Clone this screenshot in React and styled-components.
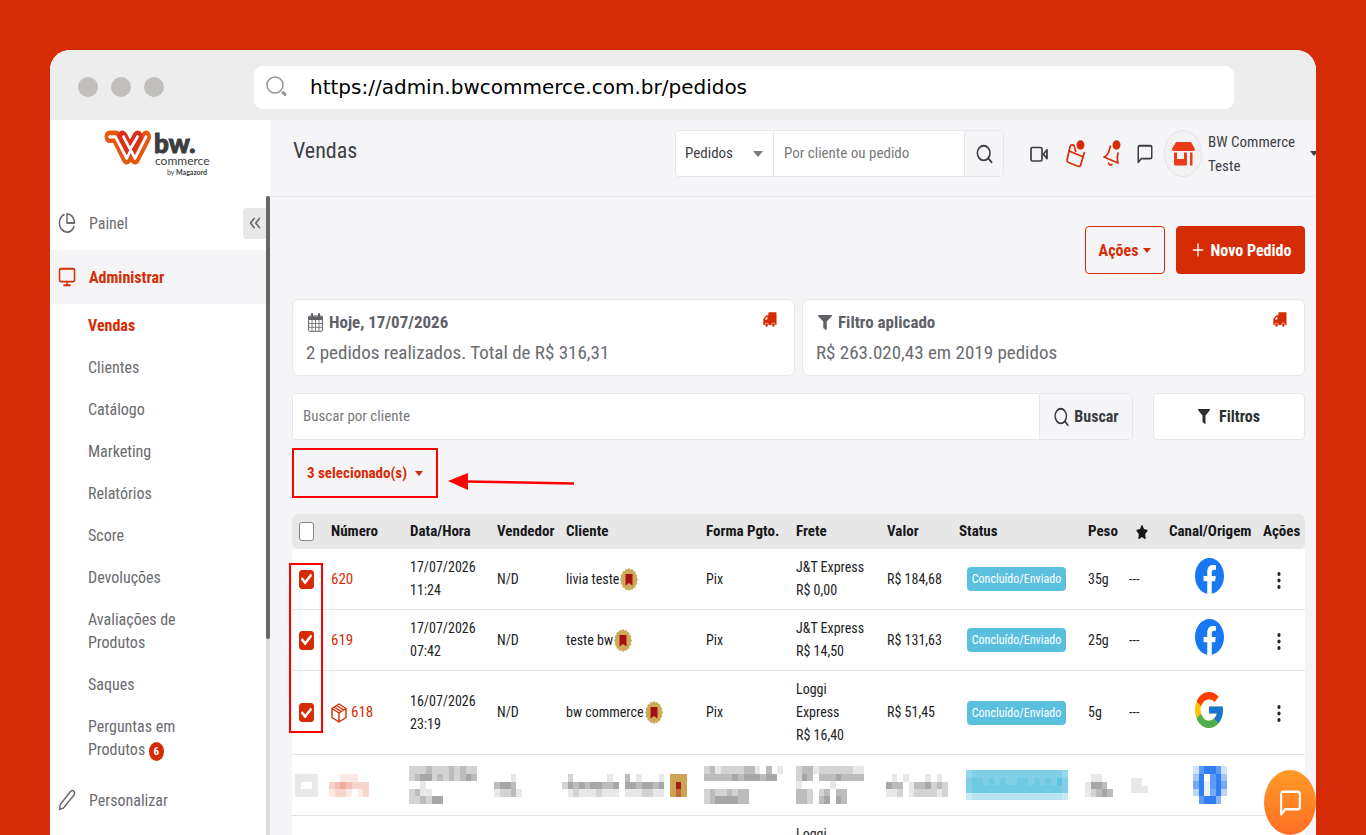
import React, { useState } from 'react'

import styled, { createGlobalStyle, css } from 'styled-components'

import { FiPieChart, FiMonitor, FiMessageSquare, FiSearch, FiChevronsLeft, FiPlus } from 'react-icons/fi'
import { FaFacebook, FaFilter, FaStar, FaCheck } from 'react-icons/fa'
import { FcGoogle } from 'react-icons/fc'

const red = '#d62c05'
const marker = '#ff0000'

const GlobalStyle = createGlobalStyle`
  * {
    box-sizing: border-box;
  }
  body {
    margin: 0;
    background: ${red};
    color: #212325;
    font-family: 'Roboto Condensed', Roboto, sans-serif;
    font-size: 15px;
    line-height: 23px;
  }
  button, input, select {
    font: inherit;
    color: inherit;
  }
  a {
    color: inherit;
    text-decoration: none;
  }
`

const Stage = styled.div`
  height: 100vh;
  padding: 50px 50px 0;
  overflow: hidden;
`

const BrowserWindow = styled.div`
  display: flex;
  flex-direction: column;
  height: 100%;
  overflow: hidden;
  border-radius: 20px 20px 0 0;
  background: #f5f5f8;
`

const BrowserBar = styled.div`
  display: flex;
  flex-shrink: 0;
  align-items: center;
  height: 70px;
  padding: 4px 82px 0 28px;
  background: #ededed;
`

const Dot = styled.span`
  width: 20px;
  height: 20px;
  margin-right: 13px;
  border-radius: 50%;
  background: #c0bfbd;
`

const AddressBar = styled.label`
  display: flex;
  flex: 1;
  align-items: center;
  height: 43px;
  margin-left: 77px;
  padding-left: 12px;
  border-radius: 9px;
  background: #fff;
`

const AddressInput = styled.input`
  flex: 1;
  margin-left: 22px;
  padding: 0;
  border: 0;
  outline: 0;
  background: none;
  color: #000;
  font-family: 'DejaVu Sans', sans-serif;
  font-size: 20px;
`

const Page = styled.div`
  display: flex;
  flex: 1;
  min-height: 0;
`

const Sidebar = styled.aside`
  display: flex;
  flex-shrink: 0;
  flex-direction: column;
  width: 220px;
  background: #fff;
`

const LogoLink = styled.a`
  display: flex;
  flex-shrink: 0;
  height: 76px;
  padding: 8px 0 0 54px;
`

const MenuScroll = styled.div`
  display: flex;
  flex: 1;
  min-height: 0;
`

const Menu = styled.nav`
  flex: 1;
  overflow: hidden;
  color: #6b6c70;
  font-size: 16px;
`

const ScrollTrack = styled.div`
  width: 4px;
  background: #dcdcdd;
`

const ScrollThumb = styled.div`
  height: 443px;
  border-radius: 2px;
  background: #666;
`

const MenuRow = styled.div`
  display: flex;
  align-items: center;
  height: 54px;
  padding-left: 8px;
  ${({ $active }) => $active && css`
    background: #f5f5f8;
    color: ${red};
    font-weight: bold;
  `}
`

const MenuLink = styled.a`
  display: flex;
  flex: 1;
  align-items: center;
  gap: 13px;
`

const CollapseButton = styled.button`
  display: grid;
  place-items: center;
  width: 23px;
  height: 31px;
  padding: 0;
  border: 0;
  border-radius: 4px 0 0 4px;
  background: #e8e8e8;
`

const SubMenu = styled.ul`
  margin: 0;
  padding: 0 80px 3px 38px;
  list-style: none;
`

const SubItem = styled.li`
  padding: 10px 0 9px;
  ${({ $active }) => $active && css`
    color: ${red};
    font-weight: bold;
  `}
`

const Count = styled.span`
  display: inline-block;
  width: 15px;
  height: 19px;
  border-radius: 50%;
  background: ${red};
  color: #fff;
  font-size: 11px;
  font-weight: bold;
  line-height: 19px;
  text-align: center;
`

const Main = styled.main`
  position: relative;
  flex: 1;
  min-width: 0;
  overflow: hidden;
`

const TopBar = styled.header`
  display: flex;
  align-items: flex-start;
  height: 77px;
  padding: 10px 0 0 23px;
  border-bottom: 1px solid #e8e8ea;
`

const Title = styled.h1`
  flex: 1;
  margin: 0;
  color: #3e4044;
  font-size: 22px;
  font-weight: normal;
  line-height: 41px;
`

const fieldGroup = css`
  display: flex;
  height: 47px;
  overflow: hidden;
  border: 1px solid #e6e7ea;
  border-radius: 4px;
  background: #fff;
`

const GlobalSearch = styled.form`
  ${fieldGroup}
  width: 329px;
`

const SelectWrap = styled.label`
  display: flex;
  align-items: center;
  width: 98px;
  padding-right: 10px;
  border-right: 1px solid #e6e7ea;
  color: #3e4044;
`

const Select = styled.select`
  flex: 1;
  min-width: 0;
  height: 100%;
  padding: 0 0 0 9px;
  border: 0;
  outline: 0;
  appearance: none;
  background: none;
`

const Caret = styled.span`
  flex-shrink: 0;
  width: 0;
  height: 0;
  border: ${({ $size = 4 }) => $size}px solid transparent;
  border-top-color: currentColor;
  border-top-width: ${({ $size = 4 }) => $size + 1}px;
  border-bottom: 0;
  color: ${({ $color }) => $color};
`

const TextInput = styled.input`
  flex: 1;
  min-width: 0;
  padding: 0 10px;
  border: 0;
  outline: 0;
  background: #fff;
  &::placeholder {
    color: #77797c;
    opacity: 1;
  }
`

const SearchButton = styled.button`
  display: flex;
  align-items: center;
  justify-content: center;
  gap: 4px;
  width: ${({ $wide }) => ($wide ? 93 : 39)}px;
  padding: 0;
  border: 0;
  border-left: 1px solid #e6e7ea;
  background: #f5f5f8;
  color: #3a3c3f;
  font-size: 16px;
  font-weight: bold;
`

const HeaderTools = styled.div`
  display: flex;
  align-items: center;
  height: 47px;
  padding-left: 26px;
  color: #3a3c3f;
`

const ToolButton = styled.button`
  display: grid;
  place-items: center;
  width: ${({ $width }) => $width}px;
  margin-right: ${({ $gap }) => $gap}px;
  padding: 0;
  border: 0;
  background: none;
`

const Avatar = styled.span`
  display: grid;
  place-items: center;
  flex-shrink: 0;
  width: 38px;
  height: 47px;
  border: 1px solid #dfe3e8;
  border-radius: 50%;
  background: #f2f2f2;
`

const UserButton = styled.button`
  display: flex;
  align-items: center;
  width: 152px;
  padding: 0;
  border: 0;
  background: none;
  color: #3e4044;
  line-height: 24px;
  text-align: left;
`

const UserName = styled.span`
  flex-shrink: 0;
  width: 96px;
  margin: 0 6px;
`

const Content = styled.div`
  display: flex;
  flex-direction: column;
  padding: 29px 11px 0 22px;
`

const PageActions = styled.div`
  display: flex;
  justify-content: flex-end;
  gap: 11px;
  height: 48px;
  margin-bottom: 25px;
`

const ActionButton = styled.button`
  display: flex;
  align-items: center;
  justify-content: center;
  gap: 5px;
  width: ${({ $primary }) => ($primary ? 129 : 80)}px;
  padding: 0;
  border: 1px solid ${red};
  border-radius: 4px;
  background: ${({ $primary }) => ($primary ? red : 'transparent')};
  color: ${({ $primary }) => ($primary ? '#fff' : red)};
  font-size: 16px;
  font-weight: bold;
`

const Cards = styled.div`
  display: grid;
  grid-template-columns: 1fr 1fr;
  gap: 7px;
  margin-bottom: 17px;
`

const Card = styled.section`
  display: flex;
  align-items: flex-start;
  justify-content: space-between;
  height: 77px;
  padding: 10px 17px 0 13px;
  border: 1px solid #e8e8ea;
  border-radius: 7px;
  background: #fff;
  color: #6b6c70;
`

const CardTitle = styled.h2`
  display: flex;
  align-items: center;
  gap: 6px;
  margin: 0 0 3px 2px;
  color: #606267;
  font-size: 17px;
  line-height: 25px;
`

const CardText = styled.p`
  margin: 0;
  font-size: 19px;
  line-height: 30px;
`

const CardIcon = styled.span`
  padding-top: 2px;
`

const Filters = styled.div`
  display: flex;
  gap: 20px;
  margin-bottom: 8px;
`

const ClientSearch = styled.form`
  ${fieldGroup}
  flex: 1;
`

const FilterButton = styled.button`
  ${fieldGroup}
  align-items: center;
  justify-content: center;
  gap: 9px;
  width: 152px;
  color: #2c2e30;
  font-size: 16px;
  font-weight: bold;
`

const Selection = styled.div`
  display: flex;
  align-items: center;
  gap: 10px;
  margin-bottom: 16px;
`

const SelectedButton = styled.button`
  display: flex;
  align-items: center;
  gap: 8px;
  width: 146px;
  height: 50px;
  padding: 0 0 0 13px;
  border: 2px solid ${marker};
  background: transparent;
  color: ${red};
  font-weight: bold;
`

const ArrowBox = styled.span`
  padding-top: 18px;
  line-height: 0;
`

const TableWrap = styled.div`
  position: relative;
`

const Highlight = styled.div`
  position: absolute;
  top: 49px;
  left: -3px;
  width: 34px;
  height: 170px;
  border: 2px solid ${marker};
  pointer-events: none;
`

const Table = styled.table`
  width: 100%;
  table-layout: fixed;
  border-collapse: separate;
  border-spacing: 0;
  font-size: 14px;
`

const HeadCell = styled.th`
  height: 35px;
  padding: 0 0 0 8px;
  background: #e7e7e7;
  color: #17181a;
  font-size: 15px;
  text-align: left;
  white-space: nowrap;
  &:first-child {
    border-radius: 7px 0 0 7px;
  }
  &:last-child {
    border-radius: 0 7px 7px 0;
  }
`

const StarBox = styled.div`
  display: flex;
  padding-left: 7px;
`

const Cell = styled.td`
  height: 61px;
  padding: 7px 0 7px 8px;
  border-bottom: 1px solid #dfe4e8;
  background: #fff;
  vertical-align: ${({ $top }) => ($top ? 'top' : 'middle')};
  white-space: nowrap;
`

const CheckWrap = styled.label`
  display: grid;
  place-items: center;
  width: 15px;
  height: 19px;
  margin-left: -1px;
  color: #fff;
  > * {
    grid-area: 1 / 1;
  }
`

const CheckInput = styled.input`
  width: 15px;
  height: 19px;
  margin: 0;
  appearance: none;
  border: 1px solid #85878a;
  border-radius: 3px;
  background: #fff;
  &:checked {
    border-color: ${red};
    background: ${red};
  }
`

const Inline = styled.span`
  display: flex;
  align-items: center;
  gap: ${({ $gap = 0 }) => $gap}px;
`

const OrderLink = styled.a`
  color: ${red};
  font-size: 15px;
`

const Badge = styled.span`
  display: inline-block;
  width: 99px;
  height: 24px;
  margin-left: 8px;
  border-radius: 4px;
  background: #5bc0de;
  color: #fff;
  font-size: 12px;
  line-height: 24px;
  text-align: center;
  vertical-align: middle;
`

const Channel = styled.div`
  padding: 0 0 6px 26px;
  line-height: 0;
`

const MoreButton = styled.button`
  display: block;
  margin-left: 8px;
  padding: 6px 6px 4px;
  border: 0;
  background: none;
  line-height: 0;
`

const IconBox = styled.span`
  display: inline-block;
  flex-shrink: 0;
  width: ${({ $w }) => $w}px;
  height: ${({ $h }) => $h}px;
  line-height: 0;
  svg {
    width: 100%;
    height: 100%;
  }
`

const ChatButton = styled.button`
  position: absolute;
  right: 0;
  bottom: 0;
  display: grid;
  place-items: center;
  width: 52px;
  height: 65px;
  padding: 0;
  border: 0;
  border-radius: 50%;
  background: linear-gradient(#ff9a26, #ff6f26);
  color: #fff;
`

const Icon = ({ of: Drawing, w, h, ...rest }) => (
  <IconBox $w={w} $h={h}>
    <Drawing preserveAspectRatio="none" aria-hidden="true" {...rest} />
  </IconBox>
)

const Logo = () => (
  <svg width="112" height="54" viewBox="0 0 112 54" role="img" aria-label="BW Commerce by Magazord">
    <g transform="scale(1 1.260)" fill="none" strokeLinecap="round" strokeLinejoin="round">
      <path d="M5.500 7 H12 L22.700 24 L27 16" stroke="#e8560f" strokeWidth="10" />
      <path d="M42 7 L31 24 L25 15" stroke="#e8560f" strokeWidth="10" />
      <path d="M18.500 7 L26 18 L33.500 7" stroke="#dc2c1a" strokeWidth="10" />
      <path d="M5.500 7 H11.500 L22.700 24 L26 19" stroke="#fff" strokeWidth="2.600" />
      <path d="M42 7 L31 24 L19.500 7" stroke="#fff" strokeWidth="2.600" />
      <path d="M26.500 16.500 L33.500 7" stroke="#fff" strokeWidth="2.600" />
    </g>
    <g fill="#3d3d3f" fontFamily="Lato, sans-serif">
      <text x="50" y="25" fontSize="26" fontWeight="900" stroke="#3d3d3f" strokeWidth="1">bw.</text>
      <text x="51" y="37" fontSize="12">commerce</text>
      <text x="63" y="47" fontSize="7">by <tspan fontWeight="bold">Magazord</tspan></text>
    </g>
  </svg>
)

const AddressSearchIcon = () => (
  <svg width="22" height="24" viewBox="0 0 22 24" fill="none" stroke="#969490" aria-hidden="true">
    <circle cx="9" cy="10" r="8" strokeWidth="1.500" />
    <path d="M17 17.500 L19 19.500" strokeWidth="3" strokeLinecap="round" />
  </svg>
)

const PencilIcon = () => (
  <svg width="18" height="22" viewBox="0 0 18 22" fill="none" stroke="currentColor" strokeWidth="1.500" strokeLinejoin="round" aria-hidden="true">
    <path d="M1.500 20.500 L2.300 15.500 L12.500 2.500 Q14.500 0.700 16 2.500 Q17.200 4.500 15.800 6.300 L5.500 19 Z" />
  </svg>
)

const VideoIcon = () => (
  <svg width="18" height="16" viewBox="0 0 18 16" fill="none" stroke="currentColor" strokeWidth="1.700" strokeLinejoin="round" aria-hidden="true">
    <rect x="1" y="1.500" width="11" height="13.500" rx="1.500" />
    <path d="M17 3.800 L13.400 8.200 L17 12.600 Z" />
  </svg>
)

const GiftIcon = () => (
  <svg width="20" height="28" viewBox="0 0 20 28" fill="none" stroke={red} strokeWidth="1.700" strokeLinejoin="round" aria-hidden="true">
    <path d="M8.500 7.500 Q8.500 4.800 6.500 4.800 Q4.500 4.800 4 6.500 L1.200 19.500 Q0.800 21.500 2.500 22.500 L12 26.300 Q14 27 14.600 25 L18.500 12" />
    <path d="M3.200 11 L17.500 17 M8.500 7.500 L10 12" />
    <ellipse cx="14.500" cy="5" rx="4" ry="4.700" fill={red} stroke="none" />
  </svg>
)

const BellIcon = () => (
  <svg width="18" height="28" viewBox="0 0 18 28" fill="none" stroke={red} strokeWidth="1.700" strokeLinecap="round" strokeLinejoin="round" aria-hidden="true">
    <path d="M7.500 6 L5.500 12.500 Q4 16 1 17 L15 23 Q13.800 19 15 13" />
    <path d="M5.500 23 Q6.500 26 8.800 24.500" />
    <ellipse cx="13.500" cy="5" rx="4" ry="4.700" fill={red} stroke="none" />
  </svg>
)

const StoreIcon = () => (
  <svg width="23" height="24" viewBox="0 0 23 24" fill="#ea3b1b" aria-hidden="true">
    <path d="M4 0 H19 L23 7 Q23 9 21 9 H2 Q0 9 0 7 Z" />
    <path d="M2 10.500 H5 V17 H12 V10.500 H15 V22 Q15 23.500 13.500 23.500 H3.500 Q2 23.500 2 22 Z M18 10.500 H20.500 V23.500 H18 Z" />
  </svg>
)

const CalendarIcon = () => (
  <svg width="15" height="19" viewBox="0 0 15 19" fill="none" stroke="#606267" aria-hidden="true">
    <rect x="0.600" y="3" width="13.800" height="15.300" rx="1" />
    <path d="M0.600 4.500 H14.400 M0.600 6 H14.400" strokeWidth="2" />
    <path d="M4 1 V5 M11 1 V5" strokeWidth="2" strokeLinecap="round" />
    <path d="M0.600 10.500 H14.400 M0.600 14.300 H14.400 M4 7 V18 M7.500 7 V18 M11 7 V18" strokeWidth="0.800" />
  </svg>
)

const TruckIcon = () => (
  <svg width="14" height="16" viewBox="0 0 14 16" fill={red} aria-hidden="true">
    <path d="M6 0.300 H12.800 Q13.500 0.300 13.500 1 V12.500 Q13.500 13 13 13 H1 Q0.300 13 0.300 12.400 V7.800 Q0.300 7 0.800 6.300 L2.800 3.800 Q3.200 3.300 4 3.300 H5.400 V1 Q5.400 0.300 6 0.300 Z" />
    <path d="M1.800 7.500 L3.400 5 H4.400 V7.500 Z" fill="#fff" />
    <ellipse cx="3.600" cy="13" rx="1.700" ry="2" stroke="#fff" strokeWidth="0.600" />
    <ellipse cx="10.300" cy="13" rx="1.700" ry="2" stroke="#fff" strokeWidth="0.600" />
  </svg>
)

const PackageIcon = () => (
  <svg width="16" height="20" viewBox="0 0 16 20" fill="none" stroke={red} strokeWidth="1.400" strokeLinejoin="round" aria-hidden="true">
    <path d="M8 1 L15 5.500 V14.500 L8 19 L1 14.500 V5.500 Z M1 5.500 L8 10 L15 5.500 M8 10 V19 M3.200 4 L10.200 8.600 M5.600 2.500 L12.600 7" />
  </svg>
)

const sealPoints = Array.from({ length: 32 }, (_, i) => {
  const r = i % 2 ? 0.88 : 1
  const angle = (i * Math.PI) / 16
  return `${(9 + 9 * r * Math.cos(angle)).toFixed(1)},${(11.5 + 11.5 * r * Math.sin(angle)).toFixed(1)}`
}).join(' ')

const SealIcon = () => (
  <svg width="18" height="23" viewBox="0 0 18 23" aria-hidden="true">
    <polygon points={sealPoints} fill="#ccab58" />
    <path d="M5.500 6 H12.500 V17.500 L9 15 L5.500 17.500 Z" fill="#a80f14" />
  </svg>
)

const DotsIcon = () => (
  <svg width="4" height="17" viewBox="0 0 4 17" fill="#212325" aria-hidden="true">
    <ellipse cx="2" cy="2" rx="1.600" ry="2" />
    <ellipse cx="2" cy="8.500" rx="1.600" ry="2" />
    <ellipse cx="2" cy="15" rx="1.600" ry="2" />
  </svg>
)

const Arrow = () => (
  <ArrowBox>
    <svg width="128" height="18" viewBox="0 0 128 18" aria-hidden="true">
      <path d="M18 8.500 L126 10.500" stroke={marker} strokeWidth="2.500" />
      <path d="M0 8 L20 0 V17 Z" fill={marker} />
    </svg>
  </ArrowBox>
)

// digits are the darkness of one block, letters the colours of the seal
const blockColors = { g: '#cfa355', r: '#a81a14', o: '#c4683c' }

const Mosaic = ({ rows, color = '#222', shift = 0 }) => (
  <svg
    width={Math.round(rows[0].length * 5.67)}
    height={Math.round(rows.length * 7.5)}
    viewBox={`0 0 ${rows[0].length} ${rows.length}`}
    preserveAspectRatio="none"
    shapeRendering="crispEdges"
    style={{ display: 'block', marginLeft: shift }}
    aria-hidden="true"
  >
    {rows.flatMap((row, y) => [...row].map((level, x) => {
      const seal = blockColors[level]
      if (level === '0') return null
      return <rect key={`${x}-${y}`} x={x} y={y} width="1" height="1" fill={seal || color} opacity={seal ? 1 : level / 10} />
    }))}
  </svg>
)

const hiddenCells = [
  { rows: ['1111', '1001', '1111'], shift: -5 },
  { rows: ['0011100', '2343222', '1221012'], color: red, shift: -2 },
  { rows: ['222322232322', '234423232343', '001000000000', '231100000000', '223244000000'], shift: -1 },
  { rows: ['00010', '34430', '12231'], shift: -3 },
  { rows: ['0200000010030100010ggg', '2434344334044344340grg', '0121112111011122110gog'], shift: -4 },
  { rows: ['23122223310301', '33333434443440', '00000000000000', '23223233000000', '23444433000000'], shift: -2 },
  { rows: ['233122222211', '243033343333', '100000100000', '332023033000', '332034043000'] },
  { rows: ['01010001010', '43301334232', '11201222212'], shift: -1 },
  { rows: ['677777777777777776', '788787877887878797', '788888888888888887', '344444444444444443'], color: '#4cbbdc', shift: 7 },
  { rows: ['01100', '14430', '12343'], shift: -3 },
  { rows: ['0110', '0111'], shift: -4 },
  { rows: ['279972', '490794', '691796', '391693', '079950'], color: '#1a70f0', shift: 24 },
]

const columns = [
  { width: 31 },
  { label: 'Número', width: 79 },
  { label: 'Data/Hora', width: 87 },
  { label: 'Vendedor', width: 69 },
  { label: 'Cliente', width: 140 },
  { label: 'Forma Pgto.', width: 90 },
  { label: 'Frete', width: 91 },
  { label: 'Valor', width: 72 },
  { label: 'Status', width: 129 },
  { label: 'Peso', width: 41 },
  { label: 'star', width: 40 },
  { label: 'Canal/Origem', width: 94 },
  { label: 'Ações', width: 50 },
]

const orders = [
  { id: '620', date: '17/07/2026', time: '11:24', client: 'livia teste', freight: ['J&T Express', 'R$ 0,00'], value: 'R$ 184,68', weight: '35g', channel: 'facebook' },
  { id: '619', date: '17/07/2026', time: '07:42', client: 'teste bw', freight: ['J&T Express', 'R$ 14,50'], value: 'R$ 131,63', weight: '25g', channel: 'facebook' },
  { id: '618', date: '16/07/2026', time: '23:19', client: 'bw commerce', freight: ['Loggi', 'Express', 'R$ 16,40'], value: 'R$ 51,45', weight: '5g', channel: 'google', packed: true },
]

const subItems = ['Vendas', 'Clientes', 'Catálogo', 'Marketing', 'Relatórios', 'Score', 'Devoluções', 'Avaliações de Produtos', 'Saques', 'Perguntas em Produtos']

const Checkbox = ({ label, checked, onChange }) => (
  <CheckWrap>
    <CheckInput type="checkbox" aria-label={label} checked={checked} onChange={onChange} />
    {checked && <Icon of={FaCheck} w={11} h={14} />}
  </CheckWrap>
)

const OrderRow = ({ order }) => {
  const [ checked, setChecked ] = useState(true)

  return (
    <tr>
      <Cell><Checkbox label={`Pedido ${order.id}`} checked={checked} onChange={() => setChecked(!checked)} /></Cell>
      <Cell><OrderLink href="#"><Inline $gap={4}>{order.packed && <PackageIcon />}{order.id}</Inline></OrderLink></Cell>
      <Cell>{order.date}<br />{order.time}</Cell>
      <Cell>N/D</Cell>
      <Cell><Inline $gap={1}>{order.client}<SealIcon /></Inline></Cell>
      <Cell>Pix</Cell>
      <Cell>{order.freight.map(line => <div key={line}>{line}</div>)}</Cell>
      <Cell>{order.value}</Cell>
      <Cell><Badge>Concluído/Enviado</Badge></Cell>
      <Cell>{order.weight}</Cell>
      <Cell>---</Cell>
      <Cell>
        <Channel>
          {order.channel === 'facebook'
            ? <Icon of={FaFacebook} w={29} h={36} color="#1877f2" viewBox="8 8 496 496" />
            : <Icon of={FcGoogle} w={28} h={36} viewBox="4 4 40 40" />}
        </Channel>
      </Cell>
      <Cell><MoreButton type="button" aria-label="Mais ações"><DotsIcon /></MoreButton></Cell>
    </tr>
  )
}

const OrdersTable = () => (
  <TableWrap>
    <Table>
      <colgroup>
        {columns.map((column, i) => <col key={i} style={{ width: `${column.width / 10.13}%` }} />)}
      </colgroup>
      <thead>
        <tr>
          {columns.map(({ label }, i) => (
            <HeadCell key={i} scope="col">
              {!label && <Checkbox label="Selecionar todos" checked={false} onChange={() => {}} />}
              {label === 'star' ? <StarBox><Icon of={FaStar} w={12} h={14} /></StarBox> : label}
            </HeadCell>
          ))}
        </tr>
      </thead>
      <tbody>
        {orders.map(order => <OrderRow key={order.id} order={order} />)}
        <tr>
          {hiddenCells.map((cell, i) => <Cell key={i}><Mosaic {...cell} /></Cell>)}
          <Cell />
        </tr>
        <tr>
          {columns.map(({ label }, i) => (
            <Cell key={i} $top>{label === 'Frete' && 'Loggi'}</Cell>
          ))}
        </tr>
      </tbody>
    </Table>
    <Highlight />
  </TableWrap>
)

const SideMenu = () => (
  <Sidebar>
    <LogoLink href="#"><Logo /></LogoLink>
    <MenuScroll>
      <Menu>
        <MenuRow>
          <MenuLink href="#"><Icon of={FiPieChart} w={18} h={22} />Painel</MenuLink>
          <CollapseButton type="button" aria-label="Recolher menu"><Icon of={FiChevronsLeft} w={18} h={22} /></CollapseButton>
        </MenuRow>
        <MenuRow $active>
          <MenuLink href="#"><Icon of={FiMonitor} w={18} h={22} />Administrar</MenuLink>
        </MenuRow>
        <SubMenu>
          {subItems.map((item, i) => (
            <SubItem key={item} $active={i === 0}>
              <a href="#">{item}</a> {i === subItems.length - 1 && <Count>6</Count>}
            </SubItem>
          ))}
        </SubMenu>
        <MenuRow>
          <MenuLink href="#"><PencilIcon />Personalizar</MenuLink>
        </MenuRow>
      </Menu>
      <ScrollTrack><ScrollThumb /></ScrollTrack>
    </MenuScroll>
  </Sidebar>
)

const Header = () => (
  <TopBar>
    <Title>Vendas</Title>
    <GlobalSearch>
      <SelectWrap>
        <Select aria-label="Tipo de busca"><option>Pedidos</option></Select>
        <Caret $size={5} $color="#77797c" />
      </SelectWrap>
      <TextInput aria-label="Busca" placeholder="Por cliente ou pedido" />
      <SearchButton type="button" aria-label="Buscar"><Icon of={FiSearch} w={19} h={22} /></SearchButton>
    </GlobalSearch>
    <HeaderTools>
      <ToolButton type="button" aria-label="Vídeos" $width={18} $gap={18}><VideoIcon /></ToolButton>
      <ToolButton type="button" aria-label="Novidades" $width={20} $gap={17}><GiftIcon /></ToolButton>
      <ToolButton type="button" aria-label="Notificações" $width={18} $gap={15}><BellIcon /></ToolButton>
      <ToolButton type="button" aria-label="Mensagens" $width={18} $gap={10}><Icon of={FiMessageSquare} w={18} h={22} /></ToolButton>
      <UserButton type="button">
        <Avatar><StoreIcon /></Avatar>
        <UserName>BW Commerce Teste</UserName>
        <Caret $size={4} />
      </UserButton>
    </HeaderTools>
  </TopBar>
)

export default function App() {
  return (
    <Stage>
      <GlobalStyle />
      <BrowserWindow>
        <BrowserBar>
          <Dot /><Dot /><Dot />
          <AddressBar>
            <AddressSearchIcon />
            <AddressInput aria-label="Endereço" defaultValue="https://admin.bwcommerce.com.br/pedidos" />
          </AddressBar>
        </BrowserBar>
        <Page>
          <SideMenu />
          <Main>
            <Header />
            <Content>
              <PageActions>
                <ActionButton type="button">Ações <Caret /></ActionButton>
                <ActionButton type="button" $primary><Icon of={FiPlus} w={16} h={20} />Novo Pedido</ActionButton>
              </PageActions>
              <Cards>
                <Card>
                  <div>
                    <CardTitle><CalendarIcon />Hoje, 17/07/2026</CardTitle>
                    <CardText>2 pedidos realizados. Total de R$ 316,31</CardText>
                  </div>
                  <CardIcon><TruckIcon /></CardIcon>
                </Card>
                <Card>
                  <div>
                    <CardTitle><Icon of={FaFilter} w={14} h={15} />Filtro aplicado</CardTitle>
                    <CardText>R$ 263.020,43 em 2019 pedidos</CardText>
                  </div>
                  <CardIcon><TruckIcon /></CardIcon>
                </Card>
              </Cards>
              <Filters>
                <ClientSearch>
                  <TextInput aria-label="Buscar por cliente" placeholder="Buscar por cliente" />
                  <SearchButton type="button" $wide><Icon of={FiSearch} w={17} h={22} />Buscar</SearchButton>
                </ClientSearch>
                <FilterButton type="button"><Icon of={FaFilter} w={12} h={15} />Filtros</FilterButton>
              </Filters>
              <Selection>
                <SelectedButton type="button">3 selecionado(s) <Caret /></SelectedButton>
                <Arrow />
              </Selection>
              <OrdersTable />
            </Content>
            <ChatButton type="button" aria-label="Abrir chat"><Icon of={FiMessageSquare} w={25} h={30} /></ChatButton>
          </Main>
        </Page>
      </BrowserWindow>
    </Stage>
  )
}
